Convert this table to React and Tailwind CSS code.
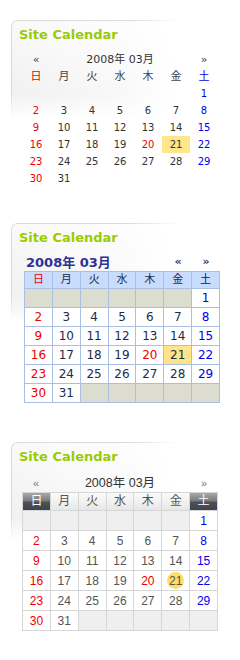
const DAYS = ['日', '月', '火', '水', '木', '金', '土']

// 2008-03: starts on Saturday, 31 days
const CELLS = [
  ...Array(6).fill(null),
  ...Array.from({ length: 31 }, (_, i) => i + 1),
  ...Array(5).fill(null),
]

const HOLIDAYS = [20]
const TODAY = 21

function dayColor(idx, day, theme) {
  const col = idx % 7
  if (col === 0 || HOLIDAYS.includes(day)) return 'text-[#ee0000]'
  if (col === 6) return 'text-[#0000ee]'
  return theme
}

function Box({ children, className = '' }) {
  return (
    <div className={`relative ml-[11px] ${className}`}>
      {/* faded rounded box behind the widget */}
      <div className="absolute left-0 top-0 w-[168px] h-[98px] rounded-tl-[6px] border-l border-t border-[#dadada] bg-gradient-to-tr from-[#eeeeee] via-[#f9f9f9] to-white [mask-image:linear-gradient(to_right,#000_70%,transparent),linear-gradient(to_bottom,#000_75%,transparent)] [mask-composite:intersect]" />
      <div className="relative">
        <h2 className="pl-[8px] pt-[7px] h-[23px] leading-[16px] text-[13px] font-bold text-[#99cc00] font-['DejaVu_Sans',sans-serif]">
          Site Calendar
        </h2>
        {children}
      </div>
    </div>
  )
}

function CalendarPlain() {
  return (
    <div className="ml-[11px] mt-[8px] w-[196px] font-['DejaVu_Sans','Noto_Sans_CJK_JP',sans-serif] text-[#333]">
      <div className="grid grid-cols-7 h-[17px] items-center text-center text-[11px] leading-none">
        <span className="text-[#444]">«</span>
        <span className="col-span-5">2008年 03月</span>
        <span className="text-[#444]">»</span>
      </div>
      <div className="grid grid-cols-7 text-center text-[11px]">
        {DAYS.map((d, i) => (
          <div key={d} className={`h-[17px] leading-[17px] ${dayColor(i, 0, 'text-[#444]')}`}>{d}</div>
        ))}
        {CELLS.slice(0, 37).map((day, i) => (
          <div
            key={i}
            className={`h-[17px] leading-[17px] text-[10px] ${day === TODAY ? 'bg-[#ffe68c]' : ''} ${dayColor(i, day, 'text-[#333]')}`}
          >
            {day}
          </div>
        ))}
      </div>
    </div>
  )
}

function CalendarBlue() {
  return (
    <div className="ml-[13px] mt-[7px] w-[196px] font-['DejaVu_Sans','Noto_Sans_CJK_JP',sans-serif]">
      <div className="flex items-center h-[18px]">
        <span className="pl-[2px] text-[13px] font-bold text-[#2d3194] leading-none">2008年 03月</span>
        <span className="ml-auto w-[28px] text-center text-[11px] font-bold text-[#1e3a86]">«</span>
        <span className="w-[28px] text-center text-[11px] font-bold text-[#1e3a86]">»</span>
      </div>
      <div className="grid grid-cols-7 border-l border-t border-[#a9c0e4] text-center">
        {DAYS.map((d, i) => (
          <div
            key={d}
            className={`h-[17px] leading-[16px] text-[11px] bg-[#c8dcfd] border-r border-b border-[#a9c0e4] ${dayColor(i, 0, 'text-[#1c2c4c]')}`}
          >
            {d}
          </div>
        ))}
        {CELLS.map((day, i) => (
          <div
            key={i}
            className={`h-[19px] leading-[18px] text-[12px] border-r border-b border-[#a9c0e4] ${
              day === null ? 'bg-[#dddcd0]' : day === TODAY ? 'bg-[#ffe48a]' : 'bg-white'
            } ${dayColor(i, day, 'text-[#1c2c48]')}`}
          >
            {day}
          </div>
        ))}
      </div>
    </div>
  )
}

function CalendarGlossy() {
  return (
    <div className="ml-[11px] mt-[9px] w-[196px] font-['Liberation_Sans','Noto_Sans_CJK_JP',sans-serif]">
      <div className="grid grid-cols-7 h-[18px] items-center text-center">
        <span className="text-[11px] text-[#777]">«</span>
        <span className="col-span-5 text-[12.5px] text-[#333]">2008年 03月</span>
        <span className="text-[11px] text-[#777]">»</span>
      </div>
      <div className="grid grid-cols-7 border-l border-t border-[#d6d6d6] text-center">
        {DAYS.map((d, i) => {
          const dark = i === 0 || i === 6
          return (
            <div
              key={d}
              className={`h-[18px] leading-[17px] text-[12px] border-r border-b border-[#d6d6d6] ${
                dark
                  ? 'text-white bg-[linear-gradient(to_bottom,#a8a8a8_0%,#7c7c7c_45%,#4c5058_55%,#3f434b_100%)]'
                  : 'text-[#555] bg-[linear-gradient(to_bottom,#fafafa_0%,#f2f2f2_50%,#e6e6e6_100%)]'
              }`}
            >
              {d}
            </div>
          )
        })}
        {CELLS.map((day, i) => (
          <div
            key={i}
            className={`h-[20px] flex items-center justify-center text-[12px] border-r border-b border-[#d6d6d6] ${
              day === null ? 'bg-[#efefef]' : 'bg-white'
            } ${dayColor(i, day, 'text-[#555]')}`}
          >
            {day === TODAY ? (
              <span className="w-[17px] h-[17px] rounded-full bg-[#ffdd6b] flex items-center justify-center">{day}</span>
            ) : (
              day
            )}
          </div>
        ))}
      </div>
    </div>
  )
}

export default function App() {
  return (
    <div className="w-[240px] h-[660px] bg-white pt-[20px]">
      <Box>
        <CalendarPlain />
      </Box>
      <Box className="mt-[36px]">
        <CalendarBlue />
      </Box>
      <Box className="mt-[39px]">
        <CalendarGlossy />
      </Box>
    </div>
  )
}
